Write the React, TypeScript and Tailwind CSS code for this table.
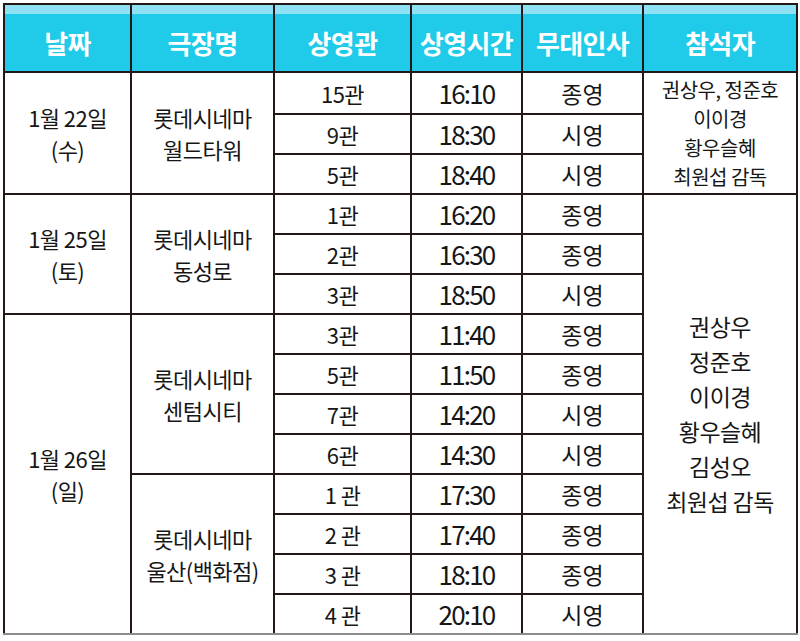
import React from 'react';

const cellFont = { fontFamily: '"Noto Sans CJK KR", "Noto Sans", sans-serif' };

const headers = ['날짜', '극장명', '상영관', '상영시간', '무대인사', '참석자'];
const colWidths = ['w-[127px]', 'w-[143px]', 'w-[137px]', 'w-[111px]', 'w-[121px]', 'w-[154px]'];

const rows = [
  {
    date: ['1월 22일', '(수)'], dateSpan: 3,
    theater: ['롯데시네마', '월드타워'], theaterSpan: 3,
    guests: ['권상우, 정준호', '이이경', '황우슬혜', '최원섭 감독'], guestSpan: 3, guestLoose: false,
    hall: '15관', time: '16:10', kind: '종영', h: 'h-[42px]',
  },
  { hall: '9관', time: '18:30', kind: '시영' },
  { hall: '5관', time: '18:40', kind: '시영' },
  {
    date: ['1월 25일', '(토)'], dateSpan: 3,
    theater: ['롯데시네마', '동성로'], theaterSpan: 3,
    guests: ['권상우', '정준호', '이이경', '황우슬혜', '김성오', '최원섭 감독'], guestSpan: 11, guestLoose: true,
    hall: '1관', time: '16:20', kind: '종영',
  },
  { hall: '2관', time: '16:30', kind: '종영' },
  { hall: '3관', time: '18:50', kind: '시영' },
  {
    date: ['1월 26일', '(일)'], dateSpan: 8,
    theater: ['롯데시네마', '센텀시티'], theaterSpan: 4,
    hall: '3관', time: '11:40', kind: '종영',
  },
  { hall: '5관', time: '11:50', kind: '종영' },
  { hall: '7관', time: '14:20', kind: '시영' },
  { hall: '6관', time: '14:30', kind: '시영' },
  {
    theater: ['롯데시네마', '울산(백화점)'], theaterSpan: 4,
    hall: '1 관', time: '17:30', kind: '종영',
  },
  { hall: '2 관', time: '17:40', kind: '종영' },
  { hall: '3 관', time: '18:10', kind: '종영' },
  { hall: '4 관', time: '20:10', kind: '시영', last: true },
] as Array<{
  date?: string[]; dateSpan?: number;
  theater?: string[]; theaterSpan?: number;
  guests?: string[]; guestSpan?: number; guestLoose?: boolean;
  hall: string; time: string; kind: string; h?: string; last?: boolean;
}>;

const td = 'border-2 border-[#231815] p-0 text-center align-middle text-[#161616]';

const App: React.FC = () => {
  return (
    <div className="min-h-[641px] w-[800px] bg-white pl-[3px] pt-[3px]" style={cellFont}>
      <table className="w-[793px] table-fixed border-collapse">
        <thead>
          <tr>
            {headers.map((h, i) => (
              <th key={h} className={`${colWidths[i]} border-2 border-[#231815] p-0`}>
                <div className="h-[9px] bg-[#8fe2f3]" />
                <div className="flex h-[57px] items-center justify-center bg-[#1fcbe8] text-[26px] font-bold tracking-tight text-white">
                  {h}
                </div>
              </th>
            ))}
          </tr>
        </thead>
        <tbody>
          {rows.map((r, i) => (
            <tr key={i} className={r.h ?? 'h-[40px]'}>
              {r.date && (
                <td rowSpan={r.dateSpan} className={`${td} text-[22px] leading-[32px] tracking-tight ${r.dateSpan === 8 ? 'border-b-[#8c8c8c]' : ''}`}>
                  {r.date.map((l) => (
                    <div key={l}>{l}</div>
                  ))}
                </td>
              )}
              {r.theater && (
                <td rowSpan={r.theaterSpan} className={`${td} text-[22px] leading-[32px] tracking-tight ${i === 10 ? 'border-b-[#8c8c8c]' : ''}`}>
                  {r.theater.map((l) => (
                    <div key={l}>{l}</div>
                  ))}
                </td>
              )}
              <td className={`${td} text-[22px] leading-none tracking-tight ${r.last ? 'border-b-[#8c8c8c]' : ''}`}>{r.hall}</td>
              <td className={`${td} text-[26px] leading-none tracking-[-0.07em] ${r.last ? 'border-b-[#8c8c8c]' : ''}`}>{r.time}</td>
              <td className={`${td} text-[23px] leading-none ${r.last ? 'border-b-[#8c8c8c]' : ''}`}>{r.kind}</td>
              {r.guests && (
                <td
                  rowSpan={r.guestSpan}
                  className={`${td} tracking-tight ${r.guestLoose ? 'text-[23px] leading-[35px] border-b-[#8c8c8c]' : 'text-[20px] leading-[29px]'}`}
                >
                  {r.guests.map((l) => (
                    <div key={l}>{l}</div>
                  ))}
                </td>
              )}
            </tr>
          ))}
        </tbody>
      </table>
    </div>
  );
};

export default App;
